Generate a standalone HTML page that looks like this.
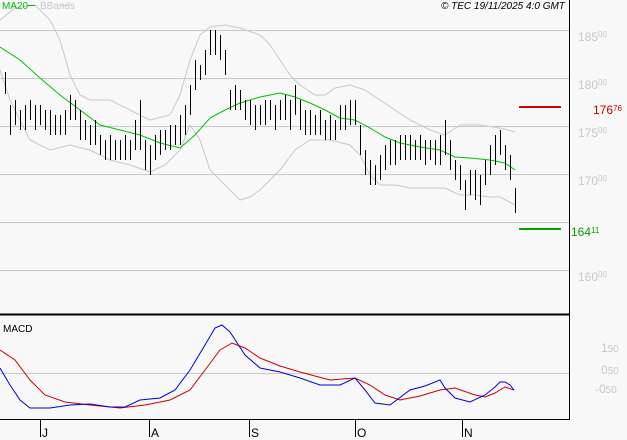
<!DOCTYPE html>
<html><head><meta charset="utf-8"><style>
html,body{margin:0;padding:0;background:#f8f8f8;}
body{width:627px;height:440px;overflow:hidden;font-family:"Liberation Sans",sans-serif;}
</style></head><body>
<svg width="627" height="440" xmlns="http://www.w3.org/2000/svg" style="display:block">
<rect width="627" height="440" fill="#f8f8f8"/>
<g stroke="#c8c8c8" stroke-width="1">
<line x1="0" y1="30.5" x2="569" y2="30.5"/><line x1="0" y1="78.5" x2="569" y2="78.5"/>
<line x1="0" y1="126.5" x2="569" y2="126.5"/><line x1="0" y1="174.5" x2="569" y2="174.5"/>
<line x1="0" y1="222.5" x2="569" y2="222.5"/><line x1="0" y1="270.5" x2="569" y2="270.5"/>
<line x1="0" y1="373.5" x2="569" y2="373.5"/>
</g>
<polyline fill="none" stroke="#c8c8c8" points="0,20 15,8 35,5 50,20 60,40 70,75 80,95 90,100 110,100 130,110 150,120 170,115 180,95 190,60 200,35 210,27 225,25 240,28 260,35 270,45 280,60 290,75 300,85 315,95 325,95 335,88 350,85 365,90 380,100 395,110 410,120 430,130 445,135 460,125 480,125 500,128 515,132"/>
<polyline fill="none" stroke="#c8c8c8" points="0,70 10,100 20,120 30,140 50,150 70,145 90,150 110,160 130,165 150,172 165,165 180,150 190,125 200,140 210,170 220,180 230,190 240,200 250,197 260,190 280,170 295,150 310,140 330,140 350,145 360,155 370,175 380,185 395,185 410,188 430,188 445,188 460,195 475,195 490,197 500,197 515,205"/>
<polyline fill="none" stroke="#00c000" points="0,47 20,60 40,78 60,95 80,110 100,125 120,130 140,135 160,143 180,148 195,135 210,118 225,110 240,103 260,97 280,93 295,97 310,103 325,110 340,118 355,120 370,128 385,137 400,143 420,147 440,150 455,157 470,158 490,160 505,163 515,170"/>
<g transform="translate(0.5,0)"><path fill="none" stroke="#000" stroke-width="1" shape-rendering="crispEdges" d="M5 72v22M10 105v30M15 100v25M20 110v20M25 105v25M30 100v20M35 105v25M40 105v20M45 110v20M50 110v25M55 115v20M60 115v20M65 110v25M70 95v25M75 100v20M80 110v30M85 120v20M90 125v20M95 120v25M100 135v20M105 140v20M110 135v25M115 140v20M120 140v20M125 135v25M130 140v20M135 120v30M140 100v50M145 140v30M150 145v30M155 135v25M160 130v25M165 130v20M170 125v25M175 125v20M180 115v30M185 105v30M190 85v30M195 60v30M200 65v15M205 50v25M210 30v25M215 30v25M220 35v25M225 50v25M230 90v20M235 85v25M240 90v20M245 100v20M250 100v25M255 105v25M260 105v20M265 100v25M270 100v20M275 105v25M280 100v20M285 95v25M290 100v30M295 85v30M300 100v30M305 110v25M310 110v25M315 115v20M320 110v25M325 120v20M330 115v25M335 120v20M340 105v25M345 105v25M350 100v25M355 100v25M360 125v30M365 150v25M370 160v25M375 165v20M380 155v25M385 145v25M390 140v25M395 140v25M400 135v25M405 135v25M410 135v25M415 140v20M420 135v25M425 140v25M430 140v20M435 140v25M440 135v30M445 120v35M450 140v30M455 160v20M460 165v25M465 180v30M470 170v25M475 170v30M480 175v30M485 160v25M490 145v30M495 135v30M500 130v25M505 145v25M510 155v25M515 188v25"/></g>
<line x1="519" y1="107" x2="561" y2="107" stroke="#cc0000" stroke-width="2"/>
<line x1="519" y1="229" x2="561" y2="229" stroke="#00a000" stroke-width="2"/>
<line x1="0" y1="314.5" x2="569" y2="314.5" stroke="#000" stroke-width="2"/>
<line x1="569.5" y1="0" x2="569.5" y2="420" stroke="#000"/>
<line x1="0" y1="419.5" x2="570" y2="419.5" stroke="#000"/>
<g stroke="#000"><line x1="40.5" y1="419" x2="40.5" y2="437"/><line x1="149.5" y1="419" x2="149.5" y2="437"/><line x1="249.5" y1="419" x2="249.5" y2="437"/><line x1="355.5" y1="419" x2="355.5" y2="437"/><line x1="462.5" y1="419" x2="462.5" y2="437"/></g>
<polyline fill="none" stroke="#cc0000" points="0,350 15,360 30,380 45,395 65,402 90,405 120,408 145,405 170,400 190,390 205,370 220,350 232,343 245,348 260,358 280,366 300,372 330,380 355,378 370,385 385,395 400,400 420,396 440,390 455,388 475,395 485,397 495,393 505,387 514,390"/>
<polyline fill="none" stroke="#0000dd" points="0,368 10,385 20,400 30,408 50,408 70,405 90,404 110,407 125,407 140,400 160,398 175,390 190,370 205,345 215,328 222,325 230,332 245,355 260,368 280,372 300,378 320,385 340,385 355,378 365,390 375,403 390,405 410,390 425,386 440,380 445,388 455,398 470,402 485,395 495,387 500,382 505,382 510,385 514,390"/>
<g font-family="Liberation Sans, sans-serif">
<text x="2" y="9" font-size="10" fill="#00c000">MA20</text><line x1="28" y1="5.5" x2="35" y2="5.5" stroke="#00c000"/>
<text x="40" y="9" font-size="10" fill="#c8c8c8">BBands</text><line x1="61" y1="5.5" x2="68" y2="5.5" stroke="#c8c8c8"/>
<text x="441" y="9" font-size="10" font-style="italic" fill="#000">© TEC 19/11/2025 4:0 GMT</text>
<g fill="#c8c8c8" font-size="12">
<text x="578" y="41">185<tspan font-size="8" dy="-4">00</tspan></text>
<text x="578" y="89">180<tspan font-size="8" dy="-4">00</tspan></text>
<text x="578" y="137">175<tspan font-size="8" dy="-4">00</tspan></text>
<text x="578" y="185">170<tspan font-size="8" dy="-4">00</tspan></text>
<text x="578" y="281">160<tspan font-size="8" dy="-4">00</tspan></text>
<text x="601" y="352">1<tspan font-size="10">50</tspan></text>
<text x="601" y="374">0<tspan font-size="10">50</tspan></text>
<text x="595" y="393">-0<tspan font-size="10">50</tspan></text>
</g>
<text x="593" y="114" font-size="12" fill="#cc0000">176<tspan font-size="8" dy="-3">76</tspan></text>
<text x="571" y="236" font-size="12" fill="#00a000">164<tspan font-size="8" dy="-3">11</tspan></text>
<text x="3" y="332" font-size="10" fill="#000">MACD</text>
<g font-size="12" fill="#000"><text x="42" y="437">J</text><text x="151" y="437">A</text><text x="251" y="437">S</text><text x="357" y="437">O</text><text x="464" y="437">N</text></g>
</g>
</svg>
</body></html>
